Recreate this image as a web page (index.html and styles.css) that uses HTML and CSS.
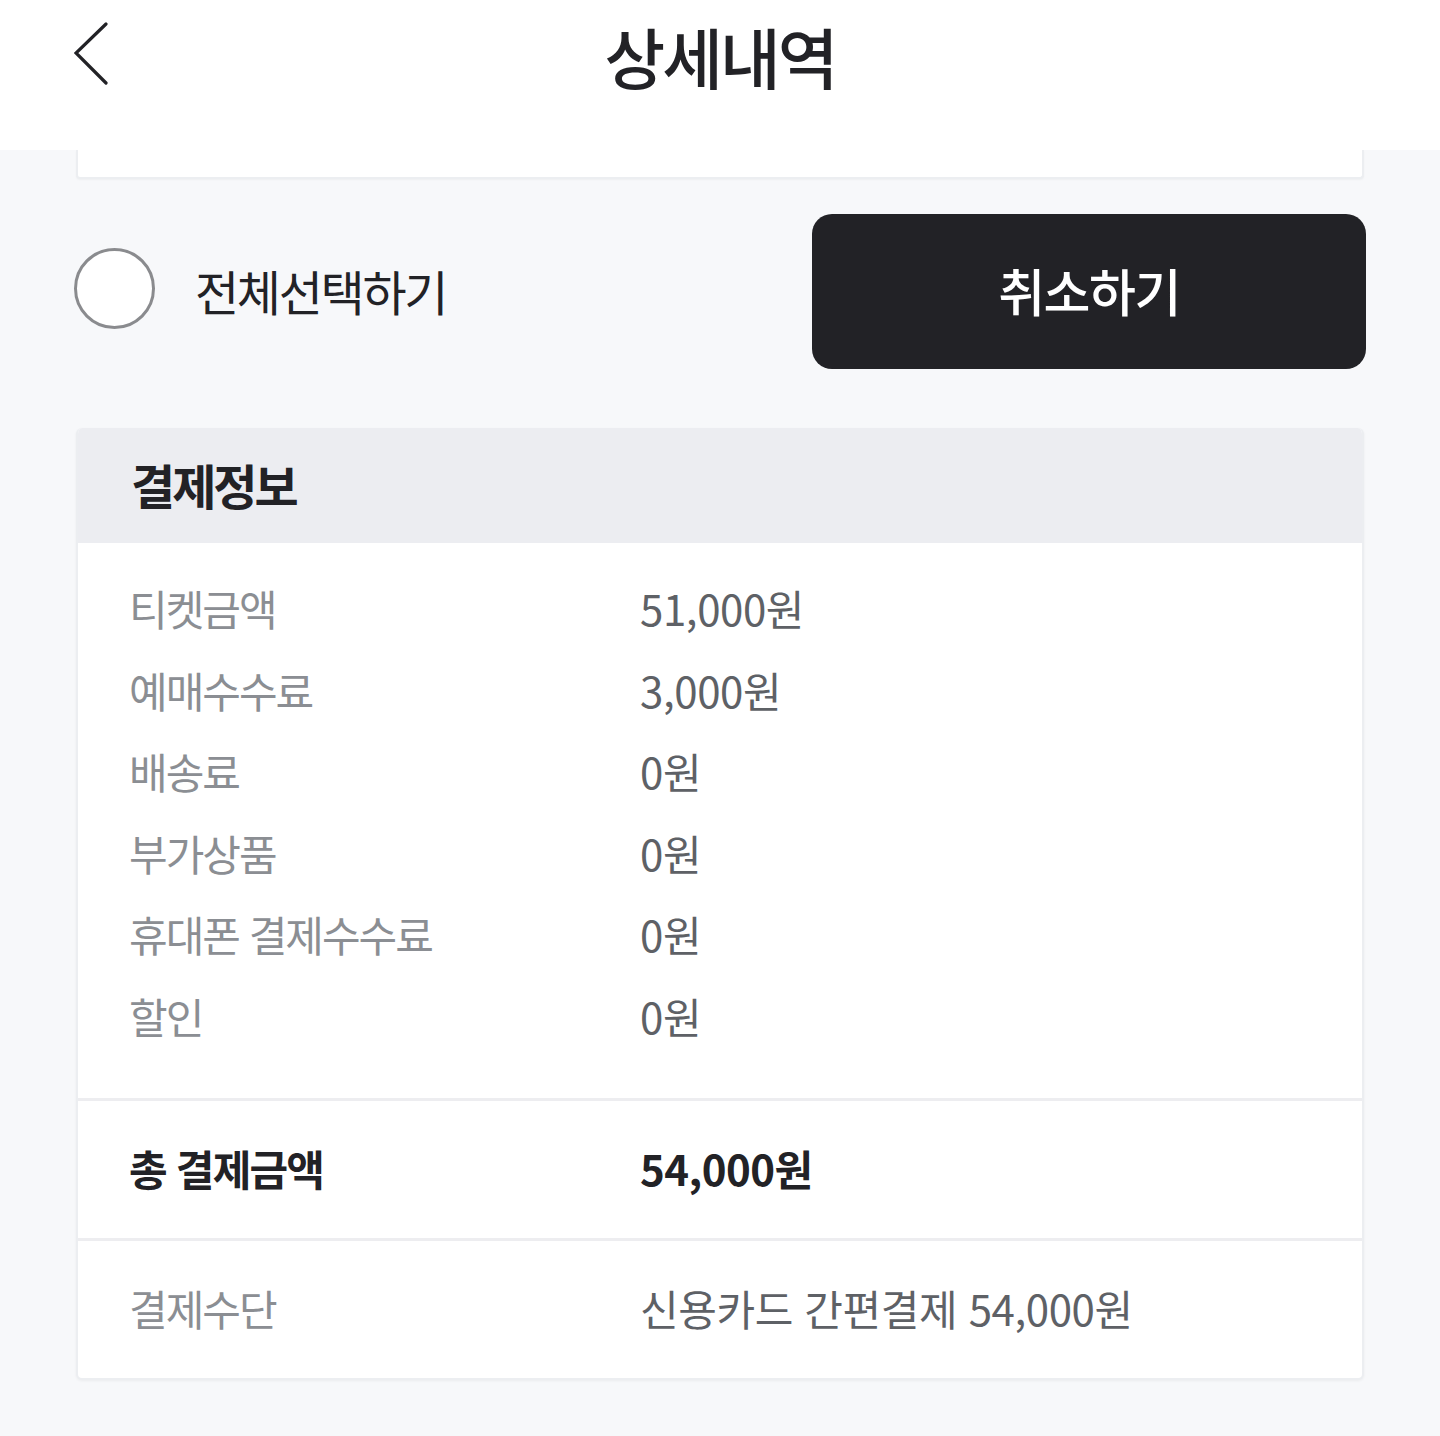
FILE: index.html
```html
<!DOCTYPE html>
<html lang="ko">
<head>
<meta charset="utf-8">
<title>상세내역</title>
<link rel="stylesheet" href="styles.css">
</head>
<body>
<header class="topbar">
  <div class="topbar-left">
    <svg class="back-icon" width="40" height="66" viewBox="0 0 40 66" aria-hidden="true">
      <polyline points="32,2 2,31 32,61" fill="none" stroke="#222226" stroke-width="3.2" stroke-linecap="round" stroke-linejoin="miter"/>
    </svg>
  </div>
  <h1 class="title">상세내역</h1>
  <div class="topbar-right"></div>
</header>

<main class="content">
  <div class="prev-card"></div>

  <div class="actions">
    <label class="select-all">
      <span class="radio"></span>
      <span class="select-label">전체선택하기</span>
    </label>
    <button class="cancel-btn" type="button">취소하기</button>
  </div>

  <section class="pay-card">
    <div class="pay-head">결제정보</div>
    <div class="pay-list">
      <div class="row"><span class="label">티켓금액</span><span class="value">51,000원</span></div>
      <div class="row"><span class="label">예매수수료</span><span class="value">3,000원</span></div>
      <div class="row"><span class="label">배송료</span><span class="value">0원</span></div>
      <div class="row"><span class="label">부가상품</span><span class="value">0원</span></div>
      <div class="row"><span class="label">휴대폰 결제수수료</span><span class="value">0원</span></div>
      <div class="row"><span class="label">할인</span><span class="value">0원</span></div>
    </div>
    <div class="total row-block">
      <span class="label">총 결제금액</span><span class="value">54,000원</span>
    </div>
    <div class="method row-block">
      <span class="label">결제수단</span><span class="value">신용카드 간편결제 54,000원</span>
    </div>
  </section>
</main>
</body>
</html>
```

FILE: styles.css
```css
* { box-sizing: border-box; }

html, body {
  margin: 0;
  padding: 0;
}

body {
  background: #f7f8fa;
  font-family: "Noto Sans CJK KR", "Noto Sans", sans-serif;
  color: #222226;
  min-height: 1436px;
}

.topbar {
  background: #ffffff;
  height: 150px;
  display: grid;
  grid-template-columns: 1fr auto 1fr;
  align-items: start;
}

.topbar-left {
  padding-left: 74px;
  padding-top: 22px;
}

.back-icon { display: block; }

.title {
  margin: 0;
  font-size: 66px;
  font-weight: 500;
  letter-spacing: -3px;
  line-height: 110px;
  color: #222226;
}

.content {
  padding: 0 76px 58px 76px;
}

.prev-card {
  height: 29px;
  background: #ffffff;
  border: 2px solid #eceef1;
  border-top: none;
  border-radius: 0 0 4px 4px;
  box-shadow: 0 1px 2px rgba(0,0,0,0.04);
}

.actions {
  display: flex;
  align-items: center;
  justify-content: space-between;
  margin-top: 35px;
  margin-right: -2px;
}

.select-all {
  display: flex;
  align-items: center;
  gap: 40px;
  margin-left: -2px;
}

.radio {
  width: 81px;
  height: 81px;
  border-radius: 50%;
  border: 3px solid #8a8b8e;
  background: #ffffff;
  display: block;
  margin-top: -6px;
}

.select-label {
  font-size: 48px;
  letter-spacing: -2.3px;
  color: #222226;
  font-weight: 400;
  line-height: 1;
  padding-bottom: 4px;
}

.cancel-btn {
  width: 554px;
  height: 155px;
  border: none;
  border-radius: 20px;
  background: #222226;
  color: #ffffff;
  font-family: inherit;
  font-size: 51px;
  letter-spacing: -1.5px;
  font-weight: 500;
  padding: 0 0 4px 0;
}

.pay-card {
  margin-top: 59px;
  background: #ffffff;
  border: 2px solid #eceef1;
  border-top: none;
  border-radius: 6px;
  box-shadow: 0 1px 3px rgba(0,0,0,0.05);
  overflow: hidden;
}

.pay-head {
  background: #ecedf1;
  height: 115px;
  font-size: 48px;
  font-weight: 700;
  letter-spacing: -3px;
  line-height: 112px;
  color: #222226;
  margin: 0 -2px;
  padding-left: 55px;
}

.pay-list {
  padding: 24px 0 42px 0;
}

.row, .row-block {
  display: grid;
  grid-template-columns: 511px 1fr;
  padding-left: 51px;
  align-items: center;
}

.row {
  height: 81.5px;
}

.label {
  font-size: 42px;
  letter-spacing: -2px;
  color: #8b8e93;
}

.value {
  font-size: 42px;
  letter-spacing: -0.4px;
  color: #5e6166;
}

.row-block {
  height: 140px;
  border-top: 3px solid #ededf0;
  padding-bottom: 4px;
}

.total .label,
.total .value {
  font-weight: 700;
  color: #222226;
}

.total .label { letter-spacing: -1.8px; }
.total .value { letter-spacing: -0.5px; }
```
